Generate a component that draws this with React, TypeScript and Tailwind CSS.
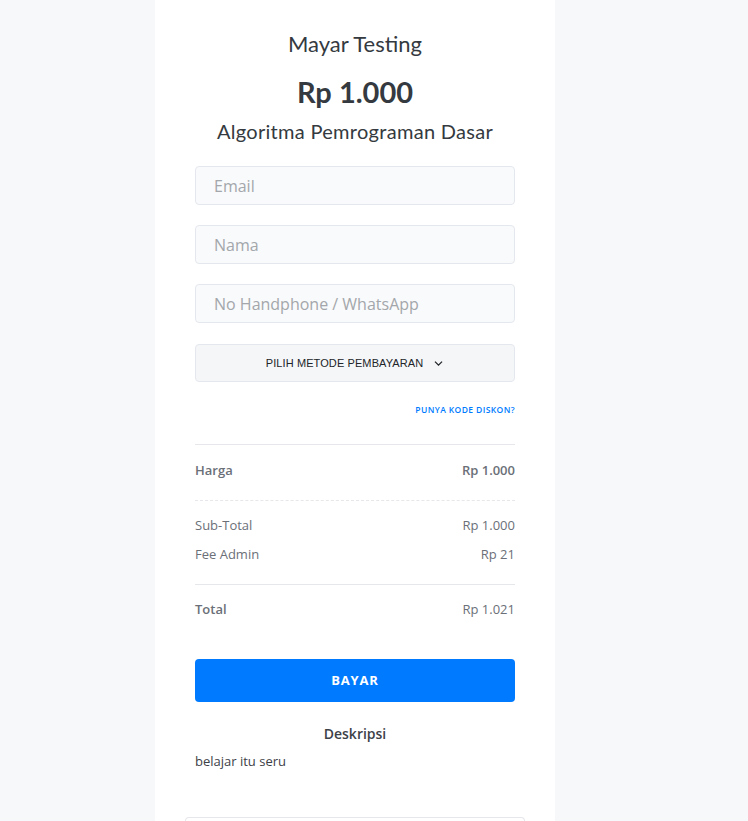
import React from "react";

function Input({ placeholder }: { placeholder: string }) {
  return (
    <div className="h-[39px] w-full shrink-0 rounded-[4px] border border-[#e4e8ee] bg-[#f9fafb] px-[18px] flex items-center">
      <span className="text-[16px] text-[#a3a7ab] font-['Open_Sans',sans-serif]">{placeholder}</span>
    </div>
  );
}

export default function App() {
  return (
    <div className="h-[821px] w-full bg-[#f7f8fa] pl-[155px] font-['Open_Sans',sans-serif] overflow-hidden">
      <div className="w-[400px] bg-white px-[40px] pt-[30px] pb-[10px] flex flex-col [&>*]:shrink-0">
        <div className="flex flex-col items-center font-['Lato',sans-serif] text-[#343a40]">
          <div className="text-[22px] leading-[28px]">Mayar Testing</div>
          <div className="mt-[18px] text-[29px] leading-[32px] font-bold">Rp 1.000</div>
          <div className="mt-[10px] text-[20px] leading-[26px] tracking-[0.3px]">Algoritma Pemrograman Dasar</div>
        </div>

        <div className="mt-[22px] flex flex-col gap-[20px]">
          <Input placeholder="Email" />
          <Input placeholder="Nama" />
          <Input placeholder="No Handphone / WhatsApp" />
        </div>

        <div className="mt-[21px] h-[38px] rounded-[4px] border border-[#e4e8ee] bg-[#f5f6f8] flex items-center justify-center gap-[10px]">
          <span className="text-[11px] text-[#212529] font-['Liberation_Sans',sans-serif] tracking-[0.1px]">PILIH METODE PEMBAYARAN</span>
          <svg width="11" height="11" viewBox="0 0 10 10" fill="none" stroke="#212529" strokeWidth="1.2">
            <path d="M1.8 3.3 L5 6.5 L8.2 3.3" />
          </svg>
        </div>

        <div className="mt-[22px] flex justify-end leading-[12px]">
          <span className="text-[8.5px] font-semibold text-[#007bff] tracking-[0.4px]">PUNYA KODE DISKON?</span>
        </div>

        <div className="mt-[28px] border-t border-[#e5e7ea]" />
        <div className="flex justify-between pt-[13px] pb-[18px] text-[13px] font-semibold text-[#6b7078] leading-[24px]">
          <span>Harga</span>
          <span>Rp 1.000</span>
        </div>
        <div className="border-t border-dashed border-[#e5e7ea]" />
        <div className="pt-[12px] pb-[18px] flex flex-col gap-[5px] text-[13px] text-[#6b7078] leading-[24px]">
          <div className="flex justify-between">
            <span>Sub-Total</span>
            <span>Rp 1.000</span>
          </div>
          <div className="flex justify-between">
            <span>Fee Admin</span>
            <span>Rp 21</span>
          </div>
        </div>
        <div className="border-t border-[#e5e7ea]" />
        <div className="flex justify-between pt-[12px] text-[13px] text-[#6b7078] leading-[24px]">
          <span className="font-semibold">Total</span>
          <span>Rp 1.021</span>
        </div>

        <button className="mt-[38px] h-[43px] w-full rounded-[4px] bg-[#007bff] text-white text-[13px] font-bold tracking-[0.8px]">
          BAYAR
        </button>

        <div className="mt-[21px] text-center text-[14px] font-semibold text-[#3d4148] leading-[22px]">Deskripsi</div>
        <div className="mt-[5px] text-[13px] text-[#3d4148] leading-[22px]">belajar itu seru</div>

        <div className="mt-[45px] -mx-[10px] h-[30px] rounded-t-[4px] border border-[#e5e7ea] border-b-0" />
      </div>
    </div>
  );
}
